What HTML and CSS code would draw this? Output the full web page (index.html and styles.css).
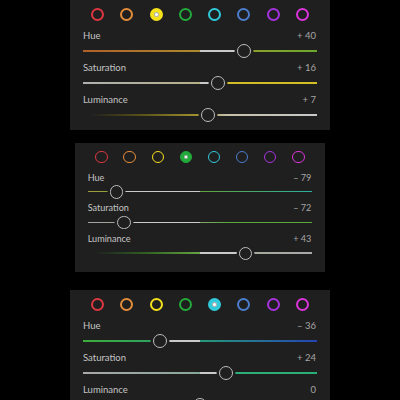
FILE: index.html
```html
<!DOCTYPE html>
<html lang="en">
<head>
<meta charset="utf-8">
<title>Color Mix</title>
<link rel="stylesheet" href="styles.css">
</head>
<body>
<main class="stack">

  <!-- Yellow channel -->
  <section class="panel">
    <div class="swatches">
      <span class="swatch swatch--red"></span>
      <span class="swatch swatch--orange"></span>
      <span class="swatch swatch--yellow swatch--active"></span>
      <span class="swatch swatch--green"></span>
      <span class="swatch swatch--aqua"></span>
      <span class="swatch swatch--blue"></span>
      <span class="swatch swatch--purple"></span>
      <span class="swatch swatch--magenta"></span>
    </div>
    <div class="adjust">
      <div class="adjust__head"><span class="adjust__label">Hue</span><span class="adjust__value">+ 40</span></div>
      <div class="slider slider--hue-yellow" style="--v: 0.7"><span class="slider__fill"></span><span class="slider__thumb"></span></div>
    </div>
    <div class="adjust">
      <div class="adjust__head"><span class="adjust__label">Saturation</span><span class="adjust__value">+ 16</span></div>
      <div class="slider slider--sat-yellow" style="--v: 0.58"><span class="slider__fill"></span><span class="slider__thumb"></span></div>
    </div>
    <div class="adjust">
      <div class="adjust__head"><span class="adjust__label">Luminance</span><span class="adjust__value">+ 7</span></div>
      <div class="slider slider--lum-yellow" style="--v: 0.535"><span class="slider__fill"></span><span class="slider__thumb"></span></div>
    </div>
  </section>

  <!-- Green channel -->
  <section class="panel panel--compact">
    <div class="swatches">
      <span class="swatch swatch--red"></span>
      <span class="swatch swatch--orange"></span>
      <span class="swatch swatch--yellow"></span>
      <span class="swatch swatch--green swatch--active"></span>
      <span class="swatch swatch--aqua"></span>
      <span class="swatch swatch--blue"></span>
      <span class="swatch swatch--purple"></span>
      <span class="swatch swatch--magenta"></span>
    </div>
    <div class="adjust">
      <div class="adjust__head"><span class="adjust__label">Hue</span><span class="adjust__value">– 79</span></div>
      <div class="slider slider--hue-green" style="--v: 0.105"><span class="slider__fill"></span><span class="slider__thumb"></span></div>
    </div>
    <div class="adjust">
      <div class="adjust__head"><span class="adjust__label">Saturation</span><span class="adjust__value">– 72</span></div>
      <div class="slider slider--sat-green" style="--v: 0.14"><span class="slider__fill"></span><span class="slider__thumb"></span></div>
    </div>
    <div class="adjust">
      <div class="adjust__head"><span class="adjust__label">Luminance</span><span class="adjust__value">+ 43</span></div>
      <div class="slider slider--lum-green" style="--v: 0.715"><span class="slider__fill"></span><span class="slider__thumb"></span></div>
    </div>
  </section>

  <!-- Aqua channel -->
  <section class="panel panel--last">
    <div class="swatches">
      <span class="swatch swatch--red"></span>
      <span class="swatch swatch--orange"></span>
      <span class="swatch swatch--yellow"></span>
      <span class="swatch swatch--green"></span>
      <span class="swatch swatch--aqua swatch--active"></span>
      <span class="swatch swatch--blue"></span>
      <span class="swatch swatch--purple"></span>
      <span class="swatch swatch--magenta"></span>
    </div>
    <div class="adjust">
      <div class="adjust__head"><span class="adjust__label">Hue</span><span class="adjust__value">– 36</span></div>
      <div class="slider slider--hue-aqua" style="--v: 0.32"><span class="slider__fill"></span><span class="slider__thumb"></span></div>
    </div>
    <div class="adjust">
      <div class="adjust__head"><span class="adjust__label">Saturation</span><span class="adjust__value">+ 24</span></div>
      <div class="slider slider--sat-aqua" style="--v: 0.62"><span class="slider__fill"></span><span class="slider__thumb"></span></div>
    </div>
    <div class="adjust">
      <div class="adjust__head"><span class="adjust__label">Luminance</span><span class="adjust__value">0</span></div>
      <div class="slider slider--lum-aqua" style="--v: 0.5"><span class="slider__fill"></span><span class="slider__thumb"></span></div>
    </div>
  </section>

</main>
</body>
</html>
```

FILE: styles.css
```css
html,
body {
  margin: 0;
  height: 400px;
  overflow: hidden;
  background: #000;
}

.stack {
  display: flex;
  flex-direction: column;
  align-items: center;
  gap: 13px;
}

/* ---------- panel ---------- */
.panel {
  --panel-bg: #1f1f1f;
  width: 260px;
  box-sizing: border-box;
  padding: 8px 13px;
  background: var(--panel-bg);
  font-family: Lato, "Open Sans", sans-serif;
}

.panel--compact {
  zoom: 0.96;
  padding-bottom: 13px;
}

.panel--last {
  margin-top: 5px;
}

/* ---------- colour swatches ---------- */
.swatches {
  display: flex;
  justify-content: space-between;
  padding: 0 8px;
  margin-bottom: 9px;
}

.swatch {
  position: relative;
  width: 13px;
  height: 13px;
  box-sizing: border-box;
  border: 2px solid var(--c);
  border-radius: 50%;
}

.swatch--red     { --c: #dc3840; }
.swatch--orange  { --c: #e48c3a; }
.swatch--yellow  { --c: #f4e01c; }
.swatch--green   { --c: #22aa3a; }
.swatch--aqua    { --c: #30cadb; }
.swatch--blue    { --c: #4c7dcf; }
.swatch--purple  { --c: #a632de; }
.swatch--magenta { --c: #da34da; }

.swatch--active {
  background: var(--c);
}

.swatch--active::after {
  content: "";
  position: absolute;
  left: 50%;
  top: 50%;
  width: 3px;
  height: 3px;
  margin: -2.5px 0 0 -2.5px;
  border: 1px solid rgba(0, 0, 0, 0.3);
  border-radius: 50%;
  background: #fff;
}

/* ---------- adjustment rows ---------- */
.adjust + .adjust {
  margin-top: 4px;
}

.adjust__head {
  display: flex;
  justify-content: space-between;
  font-size: 9.5px;
  line-height: 12px;
  margin-bottom: 2px;
}

.adjust__label {
  color: #c4c4c4;
}

.adjust__value {
  color: #a6a6a6;
  padding-right: 1px;
}

/* ---------- sliders ---------- */
.slider {
  --pos: calc(7px + (100% - 14px) * var(--v));
  position: relative;
  height: 14px;
}

.slider::before {
  content: "";
  position: absolute;
  left: 0;
  right: 0;
  top: 6px;
  height: 1.6px;
  background: var(--track);
}

.slider__fill {
  position: absolute;
  top: 6px;
  height: 1.6px;
  left: min(50%, var(--pos));
  right: calc(100% - max(50%, var(--pos)));
  background: #cacaca;
}

.slider__thumb {
  position: absolute;
  top: 0;
  left: calc(var(--pos) - 7px);
  width: 14px;
  height: 14px;
  box-sizing: border-box;
  border: 1.5px solid #bdbdbd;
  border-radius: 50%;
  background: var(--panel-bg);
  box-shadow: 0 0 0 2.5px var(--panel-bg);
}

/* channel gradients */
.slider--hue-yellow { --track: linear-gradient(to right, #b0602a, #ac8a2c 50%, #8ea02a 70%, #6aa82c); }
.slider--sat-yellow { --track: linear-gradient(to right, #b0b0b0, #b4b08a 48%, #d2bc28 62%, #d4be24); }
.slider--lum-yellow { --track: linear-gradient(to right, #1f1f1f 3%, #5a5218 25%, #9e8e2e 48%, #c4c0a8 62%, #c8c8c8); }

.slider--hue-green { --track: linear-gradient(to right, #a0a03a, #62a23c 50%, #2cb0a0); }
.slider--sat-green { --track: linear-gradient(to right, #a4a4a4, #8ea47a 48%, #5ca83a 62%, #58aa38); }
.slider--lum-green { --track: linear-gradient(to right, #1f1f1f 3%, #2f5e22 25%, #60a03e 48%, #a0aa96 62%, #aaaaaa); }

.slider--hue-aqua { --track: linear-gradient(to right, #3cac3a, #269a78 50%, #2444b4); }
.slider--sat-aqua { --track: linear-gradient(to right, #a8a8a8, #8aa89a 48%, #2eae7a 62%, #2aae78); }
.slider--lum-aqua { --track: linear-gradient(to right, #1f1f1f 3%, #1e5a5a 25%, #3aa0a0 48%, #a0b0b0 62%, #b0b0b0); }
```
